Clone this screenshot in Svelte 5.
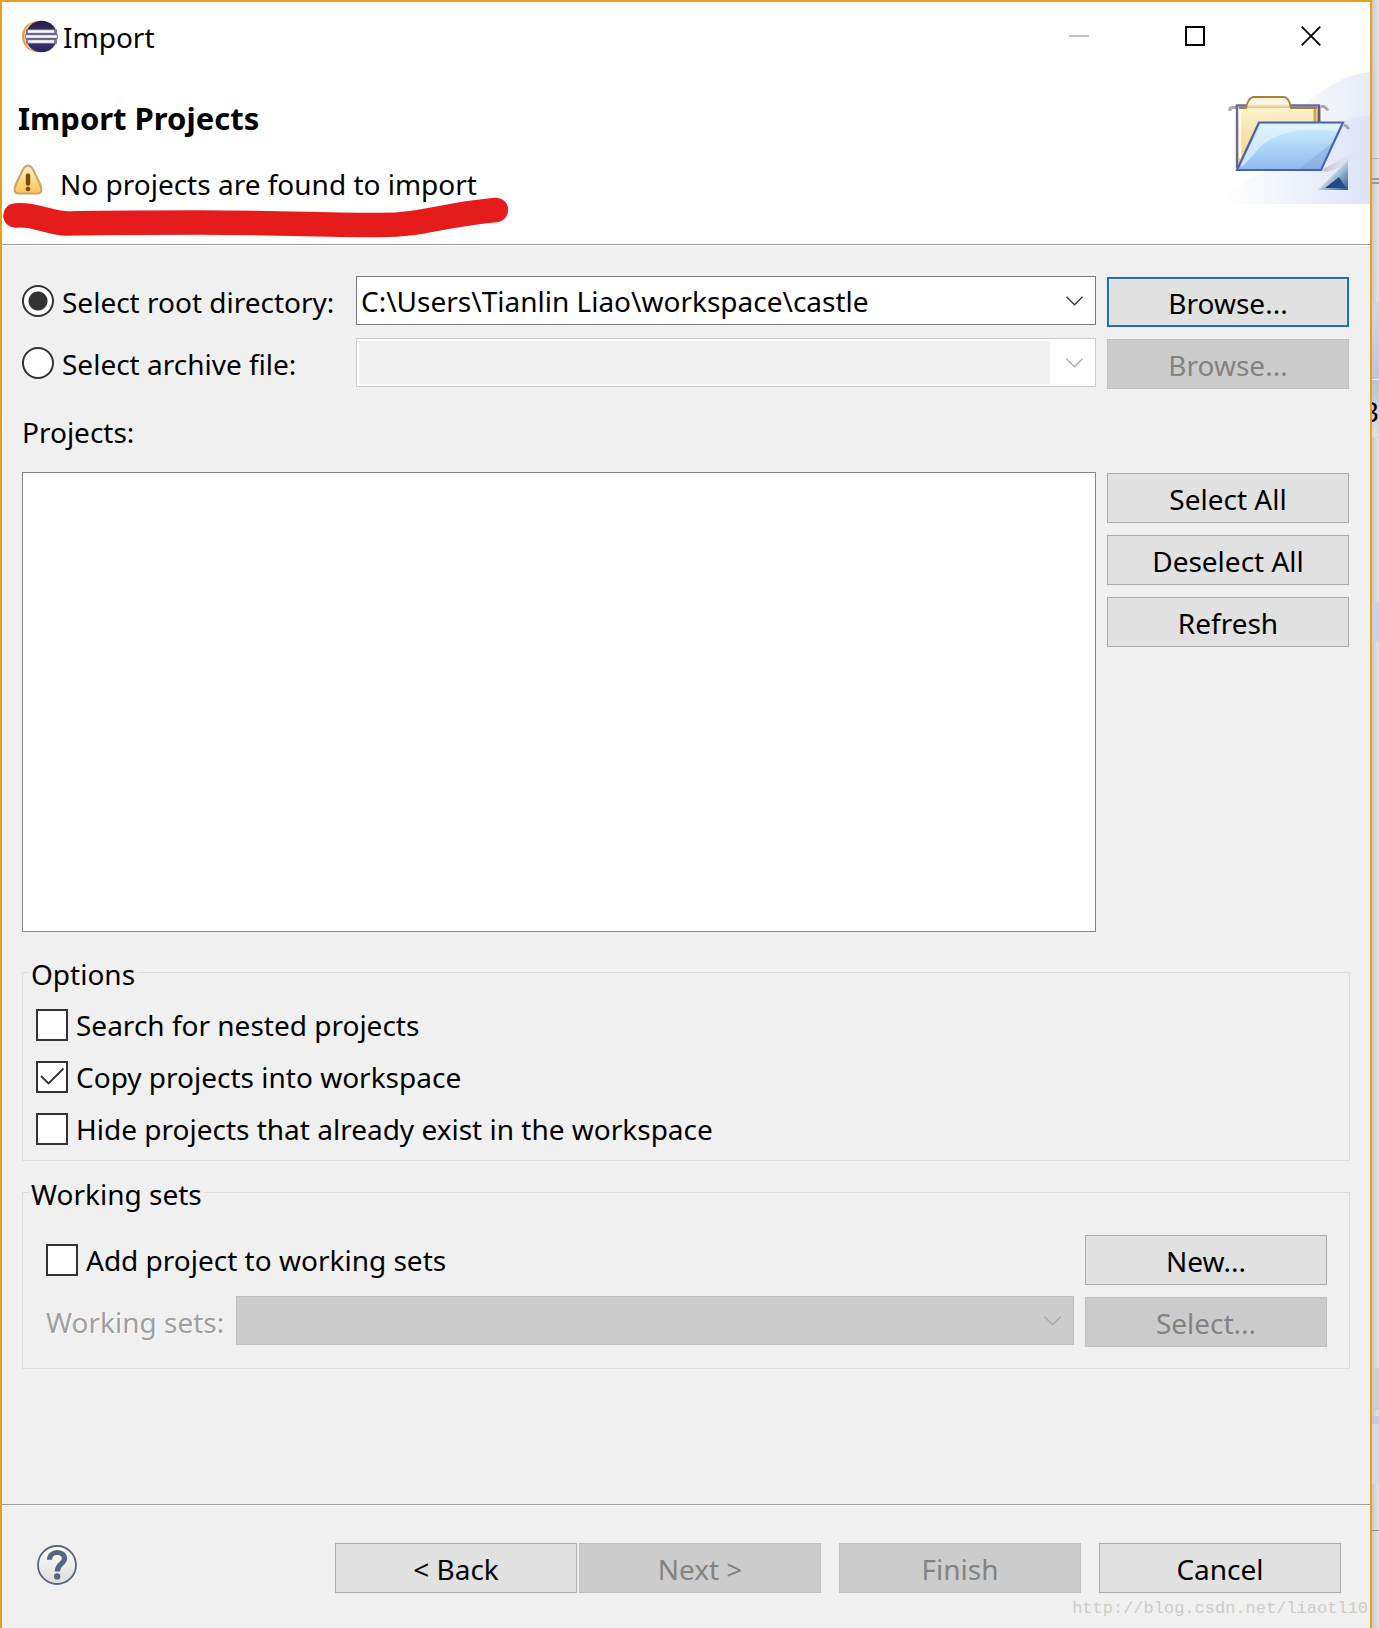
<script>
  let source = $state('root');
  let directory = $state('C:\\Users\\Tianlin Liao\\workspace\\castle');
  let options = $state([
    { id: 'nested', label: 'Search for nested projects', checked: false },
    { id: 'copy', label: 'Copy projects into workspace', checked: true },
    { id: 'hide', label: 'Hide projects that already exist in the workspace', checked: false },
  ]);
  let addToSets = $state(false);
</script>

{#snippet chevron()}
  <svg class="chevron" width="17" height="10" viewBox="0 0 17 10" aria-hidden="true">
    <path d="M.5 .8 8.5 8.8 16.5 .8" fill="none" stroke="currentColor" stroke-width="1.3" />
  </svg>
{/snippet}

{#snippet tick()}
  <svg class="tick" width="32" height="32" viewBox="0 0 32 32" aria-hidden="true">
    <path d="M5 15 12.5 22.5 27.5 7.5" fill="none" stroke="#333" stroke-width="1.8" />
  </svg>
{/snippet}

<div class="desktop">
  <main class="dialog">
    <div class="titlebar">
      <svg class="logo" width="38" height="36" viewBox="0 0 38 36" aria-hidden="true">
        <defs>
          <linearGradient id="ecl" x1="0" y1="0" x2="0" y2="1">
            <stop offset="0" stop-color="#221a48" />
            <stop offset=".5" stop-color="#40386c" />
            <stop offset="1" stop-color="#2c2468" />
          </linearGradient>
        </defs>
        <circle cx="16.5" cy="17.5" r="15.5" fill="#f0983c" />
        <circle cx="19" cy="17.5" r="15.8" fill="#f6d3ac" />
        <circle cx="20.5" cy="17.5" r="15.8" fill="url(#ecl)" />
        <path d="M5 12.5H36M4 17.5H37M5 22.5H36" stroke="#7f799f" stroke-width="4.600" />
        <path d="M7 12.5H33M5 17.5H36M7 22.5H33" stroke="#fff" stroke-width="2.400" />
      </svg>
      <span class="caption">Import</span>
      <div class="controls">
        <button class="ctl" aria-label="Minimize" disabled>
          <svg width="20" height="20" viewBox="0 0 20 20"><path d="M0 10H20" stroke="#c6c6c6" stroke-width="2" /></svg>
        </button>
        <button class="ctl" aria-label="Maximize">
          <svg width="20" height="20" viewBox="0 0 20 20"><rect x="1" y="1" width="18" height="18" fill="none" stroke="#000" stroke-width="2" /></svg>
        </button>
        <button class="ctl" aria-label="Close">
          <svg width="20" height="20" viewBox="0 0 20 20"><path d="M.7 .7 19.3 19.3M19.3 .7 .7 19.3" stroke="#000" stroke-width="1.800" /></svg>
        </button>
      </div>
    </div>

    <header class="banner">
      <div class="intro">
        <h1>Import Projects</h1>
        <p class="message">
          <svg class="warn" width="30" height="32" viewBox="0 0 30 32" aria-hidden="true">
            <defs>
              <linearGradient id="wg" x1="0" y1="0" x2="0" y2="1">
                <stop offset="0" stop-color="#fff3cf" />
                <stop offset=".6" stop-color="#fbd57c" />
                <stop offset="1" stop-color="#fcc75c" />
              </linearGradient>
            </defs>
            <path d="M15 1.500C17.500 1.500 18.500 3 20 5.500L27 20C29.500 26 28.500 29.500 25 29.500H5C1.500 29.500 .5 26 3 20L10 5.500C11.500 3 12.500 1.500 15 1.500Z" fill="url(#wg)" stroke="#cda36a" stroke-width="2" />
            <path d="M15 11.500V19.500" stroke="#7a4a08" stroke-width="4.400" stroke-linecap="round" />
            <circle cx="15" cy="25" r="2.300" fill="#7a4a08" />
          </svg>
          No projects are found to import
        </p>
      </div>
      <svg class="art" width="155" height="132" viewBox="0 12 155 132" aria-hidden="true">
        <defs>
          <linearGradient id="sky" x1="0" x2="1" y1="0" y2="0">
            <stop offset="0" stop-color="#fff" />
            <stop offset="1" stop-color="#dde4f7" />
          </linearGradient>
          <linearGradient id="sky2" x1="0" x2="1" y1="0" y2="0">
            <stop offset=".3" stop-color="#fff" />
            <stop offset="1" stop-color="#e7ebf8" />
          </linearGradient>
          <linearGradient id="back" x1="0" x2="0" y1="0" y2="1">
            <stop offset="0" stop-color="#fbf3d0" />
            <stop offset="1" stop-color="#f0cf7a" />
          </linearGradient>
          <linearGradient id="tab" x1="0" x2="0" y1="0" y2="1">
            <stop offset="0" stop-color="#fbf0d0" />
            <stop offset=".6" stop-color="#fdf8ea" />
            <stop offset="1" stop-color="#dcbc7c" />
          </linearGradient>
          <linearGradient id="front" x1="0" x2="0" y1="0" y2="1">
            <stop offset="0" stop-color="#d0f0ff" />
            <stop offset=".5" stop-color="#aed6f8" />
            <stop offset="1" stop-color="#8fb9ee" />
          </linearGradient>
          <linearGradient id="corner" x1="0" x2="1" y1="0" y2="1">
            <stop offset=".4" stop-color="#e2ecf3" />
            <stop offset=".7" stop-color="#7c9fc3" />
            <stop offset="1" stop-color="#2c5590" />
          </linearGradient>
          <linearGradient id="shade" x1="0" x2="1" y1="0" y2="0">
            <stop offset="0" stop-color="#c2bcd3" />
            <stop offset="1" stop-color="#e4e0ee" stop-opacity="0" />
          </linearGradient>
        </defs>
        <path d="M85 48C110 26 132 14 155 12V144H10C14 120 40 84 85 48Z" fill="url(#sky2)" />
        <path d="M155 55C130 57 112 68 98 90C60 108 22 118 8 144H155Z" fill="url(#sky)" />
        <path d="M106 110 144 90C142 98 130 106 112 112Z" fill="url(#shade)" />
        <path d="M15 51V49Q15 47.500 18 47.500H23M106 46.500H109Q111 47.500 113 50.500M36 69V67Q37 66 41 66M129 65Q132 66 134 69" fill="none" stroke="#a8a8a8" stroke-width="3" />
        <path d="M22 46H104V66H46L23 109Z" fill="url(#back)" />
        <path d="M100 48V63" stroke="#c9a45c" stroke-width="3" />
        <path d="M25 49V98" stroke="#fffaf0" stroke-width="2.400" />
        <path d="M22 108V45.500H104V62" fill="none" stroke="#6a6a9c" stroke-width="2.400" />
        <path d="M104 46V62" stroke="#6a5a5c" stroke-width="2.600" />
        <path d="M31 48C32 42 35 37 39 37H69C73 37 75 43 76 48Z" fill="url(#tab)" />
        <path d="M24 48H31C32 42 35 37 39 37H69C73 37 75 43 76 48H102" fill="none" stroke="#a5823c" stroke-width="1.800" />
        <path d="M44 62.500H128L106 110H22Z" fill="url(#front)" />
        <path d="M46 64H126L122 72C90 66 54 72 40 93L28 106H25Z" fill="#e9f9ff" opacity=".6" />
        <path d="M84 109 118 82 105 109Z" fill="#7d9fce" opacity=".4" />
        <path d="M44 62.500H128L106 110H22Z" fill="none" stroke="#4862b0" stroke-width="2.200" />
        <path d="M103 130 133 100V130Z" fill="url(#corner)" />
        <path d="M110 128 124 117 131 128Z" fill="#234a84" />
      </svg>
    </header>

    <div class="content">
      <section class="source">
        <label class="choice" for="src-root">
          <input type="radio" id="src-root" name="source" value="root" bind:group={source} />
          Select root directory:
        </label>
        <div class="combo">
          <select aria-label="Root directory" bind:value={directory}>
            <option>{directory}</option>
          </select>
          {@render chevron()}
        </div>
        <button class="btn focus">Browse...</button>

        <label class="choice" for="src-archive">
          <input type="radio" id="src-archive" name="source" value="archive" bind:group={source} />
          Select archive file:
        </label>
        <div class="combo archive">
          <select aria-label="Archive file" disabled><option></option></select>
          {@render chevron()}
        </div>
        <button class="btn" disabled>Browse...</button>
      </section>

      <h2 id="projects-label">Projects:</h2>
      <section class="projects">
        <div class="list" role="listbox" aria-labelledby="projects-label" tabindex="0"></div>
        <div class="side">
          <button class="btn">Select All</button>
          <button class="btn">Deselect All</button>
          <button class="btn">Refresh</button>
        </div>
      </section>

      <fieldset class="options">
        <legend>Options</legend>
        <div class="checks">
          {#each options as opt (opt.id)}
            <label class="check" for={opt.id}>
              <span class="box">
                <input type="checkbox" id={opt.id} bind:checked={opt.checked} />
                {#if opt.checked}{@render tick()}{/if}
              </span>
              {opt.label}
            </label>
          {/each}
        </div>
      </fieldset>

      <fieldset class="sets">
        <legend>Working sets</legend>
        <div class="rows">
          <div class="row">
            <label class="check" for="add-sets">
              <span class="box">
                <input type="checkbox" id="add-sets" bind:checked={addToSets} />
                {#if addToSets}{@render tick()}{/if}
              </span>
              Add project to working sets
            </label>
            <button class="btn">New...</button>
          </div>
          <div class="row">
            <label class="dim" for="set-list">Working sets:</label>
            <div class="combo off">
              <select id="set-list" disabled><option></option></select>
              {@render chevron()}
            </div>
            <button class="btn" disabled>Select...</button>
          </div>
        </div>
      </fieldset>
    </div>

    <footer class="footer">
      <button class="help" aria-label="Help">
        <svg width="40" height="40" viewBox="0 0 40 40">
          <defs>
            <linearGradient id="hg" x1="0" x2="0" y1="0" y2="1">
              <stop offset="0" stop-color="#fff" />
              <stop offset="1" stop-color="#dcdcdc" />
            </linearGradient>
          </defs>
          <circle cx="20" cy="20" r="19" fill="url(#hg)" stroke="#56677f" stroke-width="1.800" />
          <path d="M12.500 14.800C12.500 5.300 27.500 5.300 27.500 13.500C27.500 19 20.300 18.500 20.300 26.500" fill="none" stroke="#56677f" stroke-width="5.200" />
          <circle cx="20.200" cy="31.500" r="3.200" fill="#56677f" />
        </svg>
      </button>
      <div class="nav">
        <div class="pair">
          <button class="btn">&lt; Back</button>
          <button class="btn" disabled>Next &gt;</button>
        </div>
        <button class="btn" disabled>Finish</button>
        <button class="btn">Cancel</button>
      </div>
      <span class="watermark">http://blog.csdn.net/liaotl10</span>
    </footer>

    <svg class="marker" width="520" height="60" viewBox="0 190 520 60" aria-hidden="true">
      <path d="M15.500 215.500C36 214 45 222 66 223.500C100 222.500 150 222.500 200 222.500C270 222.500 330 225 380 225C424 225 440 215 496 210" fill="none" stroke="#e61b1c" stroke-width="24.500" stroke-linecap="round" stroke-linejoin="round" />
    </svg>
  </main>

  <aside class="behind">
    <div class="b1"></div>
    <div class="b2"></div>
    <div class="b3"></div>
    <div class="b4"></div>
    <div class="b5"><span>B</span></div>
    <div class="b6"></div>
    <div class="b7"></div>
    <div class="b8"></div>
    <div class="b9"></div>
    <div class="b10"></div>
    <div class="b11"></div>
    <div class="b12"></div>
  </aside>
</div>

<style>
  :global(body) {
    margin: 0;
    background: #e4e4e4;
  }
  .desktop {
    display: flex;
    min-height: 100vh;
    font: 28px/38px 'Noto Sans', 'Open Sans', sans-serif;
    color: #000;
  }
  .desktop :global(*) {
    box-sizing: border-box;
  }
  .dialog {
    position: relative;
    flex: 1;
    min-width: 0;
    display: flex;
    flex-direction: column;
    border: 2px solid #e8a01c;
    border-bottom: 0;
    background: #f0f0f0;
  }
  button,
  select {
    font: inherit;
    color: inherit;
  }
  svg {
    display: block;
    flex: none;
  }

  .titlebar {
    display: flex;
    align-items: center;
    height: 70px;
    padding-left: 19px;
    background: #fff;
  }
  .caption {
    padding-left: 4px;
  }
  .controls {
    display: flex;
    margin: 0 1px 2px auto;
  }
  .ctl {
    display: grid;
    place-items: center;
    width: 116px;
    height: 60px;
    padding: 0;
    border: 0;
    background: none;
  }

  .banner {
    display: flex;
    justify-content: space-between;
    align-items: flex-start;
    height: 174px;
    background: #fff;
    border-bottom: 1px solid #fff;
    box-shadow: inset 0 -1px #9c9c9c;
  }
  .intro {
    padding: 24px 0 0 12px;
  }
  h1 {
    margin: 0 0 22px;
    padding-left: 4px;
    font-size: 31px;
    line-height: 44px;
  }
  .message {
    display: flex;
    align-items: center;
    gap: 17px;
    margin: 0;
    line-height: 44px;
  }
  .warn {
    margin: 0 0 8px -1px;
  }
  .marker {
    position: absolute;
    top: 188px;
    left: -2px;
    pointer-events: none;
  }

  .content {
    flex: 1;
    padding: 30px 20px 40px;
  }
  .source {
    display: grid;
    grid-template-columns: 323px 1fr 242px;
    grid-auto-rows: 51px;
    gap: 11px;
    padding-right: 1px;
  }
  .source .btn {
    align-self: end;
  }
  .choice {
    display: flex;
    align-items: center;
    gap: 8px;
    white-space: nowrap;
  }
  .choice input {
    appearance: none;
    flex: none;
    width: 32px;
    height: 32px;
    margin: 0 0 2px;
    border: 2px solid #333;
    border-radius: 50%;
    background: #fff;
  }
  .choice input:checked {
    background: radial-gradient(circle, #333 9px, #fff 10px);
  }

  .combo {
    display: grid;
    align-items: center;
    height: 49px;
    color: #333;
  }
  .combo > :global(*) {
    grid-area: 1 / 1;
  }
  .combo :global(.chevron) {
    justify-self: end;
    margin-right: 13px;
    pointer-events: none;
  }
  .combo select {
    appearance: none;
    width: 100%;
    height: 49px;
    margin: 0;
    padding: 0 45px 0 4px;
    border: 1px solid #7a7a7a;
    border-radius: 0;
    background: #fff;
    color: #000;
    opacity: 1;
  }
  .combo.archive,
  .combo.off {
    color: #a8a8a8;
  }
  .combo.archive select {
    padding: 2px 45px 2px 2px;
    border-color: #ccc;
    background: linear-gradient(#f0f0f0, #f0f0f0) content-box, #fff;
  }
  .combo.off select {
    border-color: #bfbfbf;
    background: #ccc;
  }

  .btn {
    width: 242px;
    height: 50px;
    padding: 2px 0 0;
    border: 1px solid #adadad;
    border-radius: 0;
    background: #e1e1e1;
    text-align: center;
  }
  .btn.focus {
    border: 2px solid #2a6f9c;
    box-shadow: 0 0 0 1px #dff0fb, inset 0 0 0 1px #dcecf6;
  }
  .btn:disabled {
    border-color: #bfbfbf;
    background: #ccc;
    color: #838383;
  }

  h2 {
    margin: 24px 0 21px;
    font-size: 28px;
    font-weight: 400;
  }
  .projects {
    display: flex;
    gap: 11px;
    padding-right: 1px;
  }
  .list {
    flex: 1;
    height: 460px;
    border: 1px solid #828790;
    background: #fff;
  }
  .side {
    display: flex;
    flex-direction: column;
    gap: 12px;
    padding-top: 1px;
  }

  fieldset {
    min-width: 0;
    margin: 0;
    padding: 0 6px;
    border: 1px solid #dcdcdc;
  }
  legend {
    padding: 3px 2px 0;
  }
  .options {
    margin-top: 20px;
  }
  .checks {
    display: flex;
    flex-direction: column;
    gap: 14px;
    padding: 13px 7px 12px;
  }
  .check {
    display: flex;
    align-items: center;
    gap: 8px;
    flex: 1;
  }
  .box {
    display: grid;
    flex: none;
  }
  .box > :global(*) {
    grid-area: 1 / 1;
  }
  .box :global(.tick) {
    pointer-events: none;
  }
  .check input {
    appearance: none;
    width: 32px;
    height: 32px;
    margin: 0;
    border: 2px solid #333;
    background: #fff;
  }
  .sets {
    margin-top: 11px;
  }
  .rows {
    display: flex;
    flex-direction: column;
    gap: 11px;
    padding: 21px 16px 21px 17px;
  }
  .row {
    display: flex;
    align-items: center;
    gap: 11px;
    height: 51px;
  }
  .row .btn {
    align-self: flex-end;
  }
  .row .combo {
    flex: 1;
    align-self: flex-start;
  }
  .dim {
    min-width: 179px;
    color: #a0a0a0;
    text-shadow: 1px 1px #fff;
    white-space: nowrap;
  }

  .footer {
    position: relative;
    display: flex;
    align-items: flex-start;
    justify-content: space-between;
    height: 124px;
    padding: 38px 29px 0 35px;
    border-top: 1px solid #9c9c9c;
    box-shadow: inset 0 1px #fff;
  }
  .help {
    margin-top: 2px;
    padding: 0;
    border: 0;
    background: none;
  }
  .nav {
    display: flex;
    gap: 18px;
  }
  .pair {
    display: flex;
    gap: 2px;
  }
  .watermark {
    position: absolute;
    right: 2px;
    bottom: 7px;
    font: 17px/24px 'Liberation Mono', monospace;
    color: #cdcdca;
  }

  .behind {
    flex: none;
    display: flex;
    flex-direction: column;
    width: 7px;
    overflow: hidden;
    background: linear-gradient(90deg, #cbc9c6, #e6e6e6);
  }
  .behind div {
    flex: none;
  }
  .b1 {
    height: 159px;
    border-bottom: 1px solid #b4b4b4;
  }
  .b2 {
    height: 25px;
    border-bottom: 6px double #999;
  }
  .b3 {
    height: 119px;
    border-bottom: 1px solid #d0d0d0;
  }
  .b4 {
    height: 77px;
    border-bottom: 1px solid #eef0f4;
    background: linear-gradient(#d6d6de, #bfc4d6);
  }
  .b5 {
    display: flex;
    justify-content: flex-end;
    height: 58px;
    padding-top: 12px;
    overflow: hidden;
    border-bottom: 1px solid #d4d4d4;
    background: linear-gradient(#b8c6cc, #e0e0e0);
  }
  .b6 {
    height: 164px;
  }
  .b7 {
    height: 40px;
    background: #ccd4e2;
  }
  .b8 {
    height: 726px;
  }
  .b9 {
    height: 42px;
    background: #cfcdcd;
  }
  .b10 {
    height: 14px;
    border-bottom: 8px solid #c4cada;
  }
  .b11 {
    height: 60px;
    background: #d8d9e2;
  }
  .b12 {
    height: 47px;
    border-bottom: 1px solid #8c8c8c;
  }
</style>
